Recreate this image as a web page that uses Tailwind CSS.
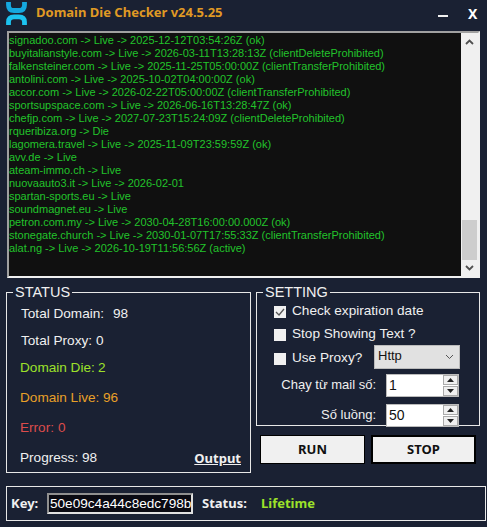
<!DOCTYPE html>
<html><head><meta charset="utf-8"><script src="https://cdn.jsdelivr.net/npm/@tailwindcss/browser@4"></script></head>
<body class="m-0 bg-[#1a2133]">
<div class="w-[487px] h-[527px] overflow-hidden bg-[#1a2133] font-['Liberation_Sans',sans-serif] text-[#f0f0f0] text-[13.6px] relative">
  <!-- title -->
  <div class="h-[31px] flex items-center pl-[6px]">
    <svg width="21" height="23" viewBox="0 0 21 23" class="shrink-0 -mt-[5px]">
      <path fill="none" stroke="#15a8e0" stroke-width="4.800" d="M2.500 0V3Q2.500 8.500 8 8.500H13Q18.500 8.500 18.500 3V0"/>
      <path fill="none" stroke="#1cc3f0" stroke-width="4.800" d="M2.500 23V20Q2.500 14.800 8 14.800H13Q18.500 14.800 18.500 20V23"/>
    </svg>
    <span class="ml-[9px] -mt-[5px] font-['Noto_Sans',sans-serif] font-bold text-[13px] text-[#e09a24]">Domain Die Checker v24.5.25</span>
    <span class="ml-auto mr-[20px] mt-[1px] w-[10px] h-[2px] bg-[#f0f0f0]"></span>
    <span class="mr-[7px] -mt-[5px] w-[12px] font-['Noto_Sans',sans-serif] font-bold text-[14px] text-white">X</span>
  </div>
  <!-- log -->
  <div class="mx-[7px] h-[247px] flex bg-[#101010] border-2 border-[#f0f0f0] border-t-[#a0a0a0] border-l-[#a0a0a0]">
    <div class="flex-1 min-w-0 pt-[1px] font-['Liberation_Sans',sans-serif] text-[11px] leading-[13px] text-[#22c32b] whitespace-nowrap overflow-hidden">
      <div>signadoo.com -&gt; Live -&gt; 2025-12-12T03:54:26Z (ok)</div>
      <div>buyitalianstyle.com -&gt; Live -&gt; 2026-03-11T13:28:13Z (clientDeleteProhibited)</div>
      <div>falkensteiner.com -&gt; Live -&gt; 2025-11-25T05:00:00Z (clientTransferProhibited)</div>
      <div>antolini.com -&gt; Live -&gt; 2025-10-02T04:00:00Z (ok)</div>
      <div>accor.com -&gt; Live -&gt; 2026-02-22T05:00:00Z (clientTransferProhibited)</div>
      <div>sportsupspace.com -&gt; Live -&gt; 2026-06-16T13:28:47Z (ok)</div>
      <div>chefjp.com -&gt; Live -&gt; 2027-07-23T15:24:09Z (clientDeleteProhibited)</div>
      <div>rqueribiza.org -&gt; Die</div>
      <div>lagomera.travel -&gt; Live -&gt; 2025-11-09T23:59:59Z (ok)</div>
      <div>avv.de -&gt; Live</div>
      <div>ateam-immo.ch -&gt; Live</div>
      <div>nuovaauto3.it -&gt; Live -&gt; 2026-02-01</div>
      <div>spartan-sports.eu -&gt; Live</div>
      <div>soundmagnet.eu -&gt; Live</div>
      <div>petron.com.my -&gt; Live -&gt; 2030-04-28T16:00:00.000Z (ok)</div>
      <div>stonegate.church -&gt; Live -&gt; 2030-01-07T17:55:33Z (clientTransferProhibited)</div>
      <div>alat.ng -&gt; Live -&gt; 2026-10-19T11:56:56Z (active)</div>
    </div>
    <div class="w-[17px] shrink-0 bg-[#f0f0f0] flex flex-col items-center">
      <div class="h-[17px] flex items-center justify-center"><svg width="9" height="6" viewBox="0 0 9 6"><path d="M1 5l3.500-3.500L8 5" fill="none" stroke="#505050" stroke-width="1.800"/></svg></div>
      <div class="flex-1"></div>
      <div class="w-[15px] h-[40px] bg-[#cdcdcd]"></div>
      <div class="h-[16px] flex items-center justify-center"><svg width="9" height="6" viewBox="0 0 9 6"><path d="M1 1l3.500 3.500L8 1" fill="none" stroke="#505050" stroke-width="1.800"/></svg></div>
    </div>
  </div>
  <!-- middle -->
  <div class="flex mt-[6px] pl-[6px]">
    <fieldset class="w-[245px] h-[189px] border border-[#e8e8e8] pl-[13px] pr-[9px] min-w-0">
      <legend class="-ml-[7px] px-[2px] text-[14.5px] leading-[16px]">STATUS</legend>
      <div class="flex flex-col leading-[16px] pt-[5px]">
        <div class="h-[27px] pt-[1px] pl-[1px] flex"><span class="w-[92px]">Total Domain:</span><span>98</span></div>
        <div class="h-[27px] pt-[1px] pl-[1px] flex"><span class="w-[75px]">Total Proxy:</span><span>0</span></div>
        <div class="h-[30px] pt-[1px] flex text-[#9de12a]"><span class="w-[78px]">Domain Die:</span><span>2</span></div>
        <div class="h-[30px] pt-[1px] flex text-[#e8a028]"><span class="w-[83px]">Domain Live:</span><span>96</span></div>
        <div class="h-[30px] pt-[1px] flex text-[#dc4c4c]"><span class="w-[38px]">Error:</span><span>0</span></div>
        <div class="flex justify-between items-center pt-[1px]"><span>Progress: 98</span><span class="font-['Noto_Sans',sans-serif] font-bold text-[13px] underline">Output</span></div>
      </div>
    </fieldset>
    <div class="ml-[5px] w-[224px] flex flex-col">
      <fieldset class="w-[224px] h-[142px] border border-[#e8e8e8] min-w-0 pl-[17px]">
        <legend class="-ml-[11px] px-[2px] text-[14.5px] leading-[16px]">SETTING</legend>
        <div class="h-[23px] flex items-center gap-[6px]"><span class="w-[12px] h-[12px] bg-[#f0f0f0] flex items-center justify-center"><svg width="10" height="8" viewBox="0 0 10 8"><path d="M1 4l3 3 5-6" fill="none" stroke="#555" stroke-width="1.300"/></svg></span><span>Check expiration date</span></div>
        <div class="h-[23px] flex items-center gap-[6px]"><span class="w-[12px] h-[12px] bg-[#f0f0f0]"></span><span>Stop Showing Text ?</span></div>
        <div class="h-[25px] flex items-center gap-[6px]"><span class="w-[12px] h-[12px] bg-[#f0f0f0]"></span><span class="w-[76px]">Use Proxy?</span>
          <div class="w-[86px] h-[24px] -mt-[4px] bg-[#e1e1e1] border border-[#bbb] pl-[3px] pr-[5px] flex items-center justify-between text-[#111] text-[13px]"><span class="-mt-[2px]">Http</span><svg width="9" height="6" viewBox="0 0 9 6"><path d="M1 1l3.500 3.500L8 1" fill="none" stroke="#555" stroke-width="1"/></svg></div>
        </div>
        <div class="mt-[3px] h-[22px] flex items-center justify-end pr-[20px] gap-[10px]"><span class="text-[13px]">Chạy từ mail số:</span>
          <div class="w-[73px] h-[23px] bg-white border border-[#bbb] flex items-center justify-between pl-[2px] text-[#111] text-[14px]"><span>1</span>
            <div class="w-[15px] h-[21px] flex flex-col gap-px bg-white"><div class="flex-1 bg-[#f0f0f0] border border-[#aaa] flex items-center justify-center"><svg width="7" height="4" viewBox="0 0 7 4"><path d="M3.500 0L7 4H0z" fill="#222"/></svg></div><div class="flex-1 bg-[#f0f0f0] border border-[#aaa] flex items-center justify-center"><svg width="7" height="4" viewBox="0 0 7 4"><path d="M3.500 4L7 0H0z" fill="#222"/></svg></div></div></div>
        </div>
        <div class="mt-[8px] h-[22px] flex items-center justify-end pr-[20px] gap-[10px]"><span class="text-[13px]">Số luồng:</span>
          <div class="w-[73px] h-[23px] bg-white border border-[#bbb] flex items-center justify-between pl-[2px] text-[#111] text-[14px]"><span>50</span>
            <div class="w-[15px] h-[21px] flex flex-col gap-px bg-white"><div class="flex-1 bg-[#f0f0f0] border border-[#aaa] flex items-center justify-center"><svg width="7" height="4" viewBox="0 0 7 4"><path d="M3.500 0L7 4H0z" fill="#222"/></svg></div><div class="flex-1 bg-[#f0f0f0] border border-[#aaa] flex items-center justify-center"><svg width="7" height="4" viewBox="0 0 7 4"><path d="M3.500 4L7 0H0z" fill="#222"/></svg></div></div></div>
        </div>
      </fieldset>
      <div class="mt-[9px] pl-[4px] flex gap-[6px] font-['Noto_Sans',sans-serif] font-bold text-[13px] text-[#111]">
        <button class="w-[105px] h-[29px] bg-[#f0f0f0] border border-black">RUN</button>
        <button class="w-[105px] h-[29px] bg-[#f0f0f0] border-2 border-black">STOP</button>
      </div>
    </div>
  </div>
  <!-- key bar -->
  <div class="absolute left-[6px] top-[486px] w-[480px] h-[35px] border border-[#e8e8e8] flex items-center pl-[4px] font-['Noto_Sans',sans-serif] font-bold text-[13px]">
    <span class="w-[36px]">Key:</span>
    <div class="w-[146px] h-[21px] bg-[#0a0a12] border-2 border-[#e0e0e0] border-t-[#909090] border-l-[#909090] px-[1px] overflow-hidden whitespace-nowrap font-['Liberation_Sans',sans-serif] font-normal text-[13.6px] leading-[17px] text-white">50e09c4a44c8edc798b7</div>
    <span class="ml-[9px] w-[59px]">Status:</span>
    <span class="text-[#9de12a]">Lifetime</span>
  </div>
</div>
</body></html>
